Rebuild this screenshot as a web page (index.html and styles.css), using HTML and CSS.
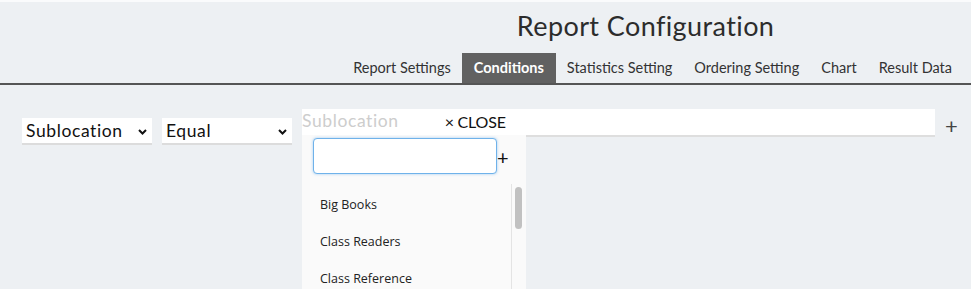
FILE: index.html
```html
<!DOCTYPE html>
<html lang="en">
<head>
    <meta charset="UTF-8">
    <meta name="viewport" content="width=device-width, initial-scale=1.0">
    <title>Report Configuration</title>
    <link rel="stylesheet" href="styles.css">
</head>
<body>
    <div class="page">
        <div class="header">
            <div class="header-inner">
                <h1 class="title">Report Configuration</h1>
                <ul class="tabs">
                    <li class="tab">Report Settings</li>
                    <li class="tab active">Conditions</li>
                    <li class="tab">Statistics Setting</li>
                    <li class="tab">Ordering Setting</li>
                    <li class="tab">Chart</li>
                    <li class="tab">Result Data</li>
                </ul>
            </div>
        </div>

        <div class="condition-row">
            <div class="select-box">
                <span>Sublocation</span>
                <svg class="chevron" width="9" height="6" viewBox="0 0 9 6"><path d="M1 1 L4.5 4.5 L8 1" fill="none" stroke="#111" stroke-width="2"/></svg>
            </div>
            <div class="select-box">
                <span>Equal</span>
                <svg class="chevron" width="9" height="6" viewBox="0 0 9 6"><path d="M1 1 L4.5 4.5 L8 1" fill="none" stroke="#111" stroke-width="2"/></svg>
            </div>

            <div class="multi-select">
                <div class="multi-top">
                    <span class="placeholder">Sublocation</span>
                    <span class="close">&times; CLOSE</span>
                </div>
                <div class="dropdown">
                    <div class="search-row">
                        <input class="search" type="text">
                        <span class="add-small">+</span>
                    </div>
                    <div class="options">
                        <div class="options-list">
                            <div class="option">Big Books</div>
                            <div class="option">Class Readers</div>
                            <div class="option">Class Reference</div>
                        </div>
                        <div class="scroll-track"><div class="scroll-thumb"></div></div>
                    </div>
                </div>
            </div>

            <span class="add-condition">+</span>
        </div>
    </div>
</body>
</html>
```

FILE: styles.css
```css
/* Report configuration - conditions tab */
body {
    margin: 0;
    font-family: Lato, "Open Sans", sans-serif;
    background-color: #edf0f3;
    color: #333;
}

.page {
    height: 100vh;
    overflow: hidden;
    box-sizing: border-box;
    border-top: 2px solid #fafbfc;
}

.header {
    display: flex;
    justify-content: flex-end;
    border-bottom: 2px solid #555;
    padding-right: 8px;
}

.header-inner {
    display: flex;
    flex-direction: column;
    align-items: center;
}

.title {
    margin: 8px 14px 0 0;
    font-size: 27px;
    font-weight: 400;
    letter-spacing: 0.4px;
    color: #2c2c2c;
    line-height: 32px;
}

.tabs {
    display: flex;
    list-style: none;
    margin: 11px 0 0;
    padding: 0;
}

.tab {
    padding: 0 11px;
    height: 30px;
    line-height: 30px;
    font-size: 14.5px;
    color: #333;
}

.tab.active {
    background-color: #616161;
    color: #fff;
    font-weight: 700;
    padding: 0 12px;
}

.condition-row {
    display: flex;
    align-items: flex-start;
    gap: 10px;
    padding: 24px 14px 0 22px;
}

.select-box {
    margin-top: 9px;
    width: 130px;
    height: 27px;
    flex-shrink: 0;
    box-sizing: border-box;
    background-color: #fff;
    border-bottom: 2px solid #dcdcdc;
    display: flex;
    align-items: center;
    justify-content: space-between;
    padding: 0 5px 0 4px;
    font-size: 17.5px;
    letter-spacing: 0.6px;
    color: #111;
}

.chevron {
    margin-top: 2px;
}

.multi-select {
    position: relative;
    flex: 1;
    height: 28px;
    box-sizing: border-box;
    background-color: #fff;
    border-bottom: 2px solid #dedede;
}

.multi-top {
    display: flex;
    align-items: center;
    height: 22px;
    font-size: 17.5px;
}

.placeholder {
    color: #cdcdcd;
    letter-spacing: 0.6px;
}

.close {
    margin-left: 46px;
    margin-top: 2px;
    font-size: 16px;
    color: #111;
    letter-spacing: -0.2px;
}

.dropdown {
    position: absolute;
    top: 26px;
    left: 0;
    width: 224px;
    height: 160px;
    background-color: #fafafa;
}

.search-row {
    display: flex;
    align-items: center;
    padding: 3px 0 0 11px;
}

.search {
    width: 184px;
    height: 36px;
    box-sizing: border-box;
    border: 1px solid #6fb2ea;
    border-radius: 4px;
    box-shadow: 0 0 3px rgba(100, 170, 235, 0.6);
    background-color: #fff;
    outline: none;
}

.add-small {
    margin-top: 2px;
    font-size: 20px;
    line-height: 20px;
    color: #111;
}

.options {
    display: flex;
    margin-top: 10px;
    height: 120px;
    font-family: "Open Sans", sans-serif;
    font-size: 12.5px;
    color: #222;
}

.options-list {
    flex: 1;
    padding-top: 2px;
}

.scroll-track {
    width: 14px;
    border-left: 1px solid #e4e4e4;
}

.scroll-thumb {
    margin: 3px 4px 0 3px;
    height: 42px;
    border-radius: 4px;
    background-color: #c1c1c1;
}

.option {
    height: 37px;
    line-height: 37px;
    padding-left: 18px;
}

.add-condition {
    margin-top: 6px;
    width: 12px;
    font-size: 22px;
    line-height: 22px;
    color: #444;
}
```
